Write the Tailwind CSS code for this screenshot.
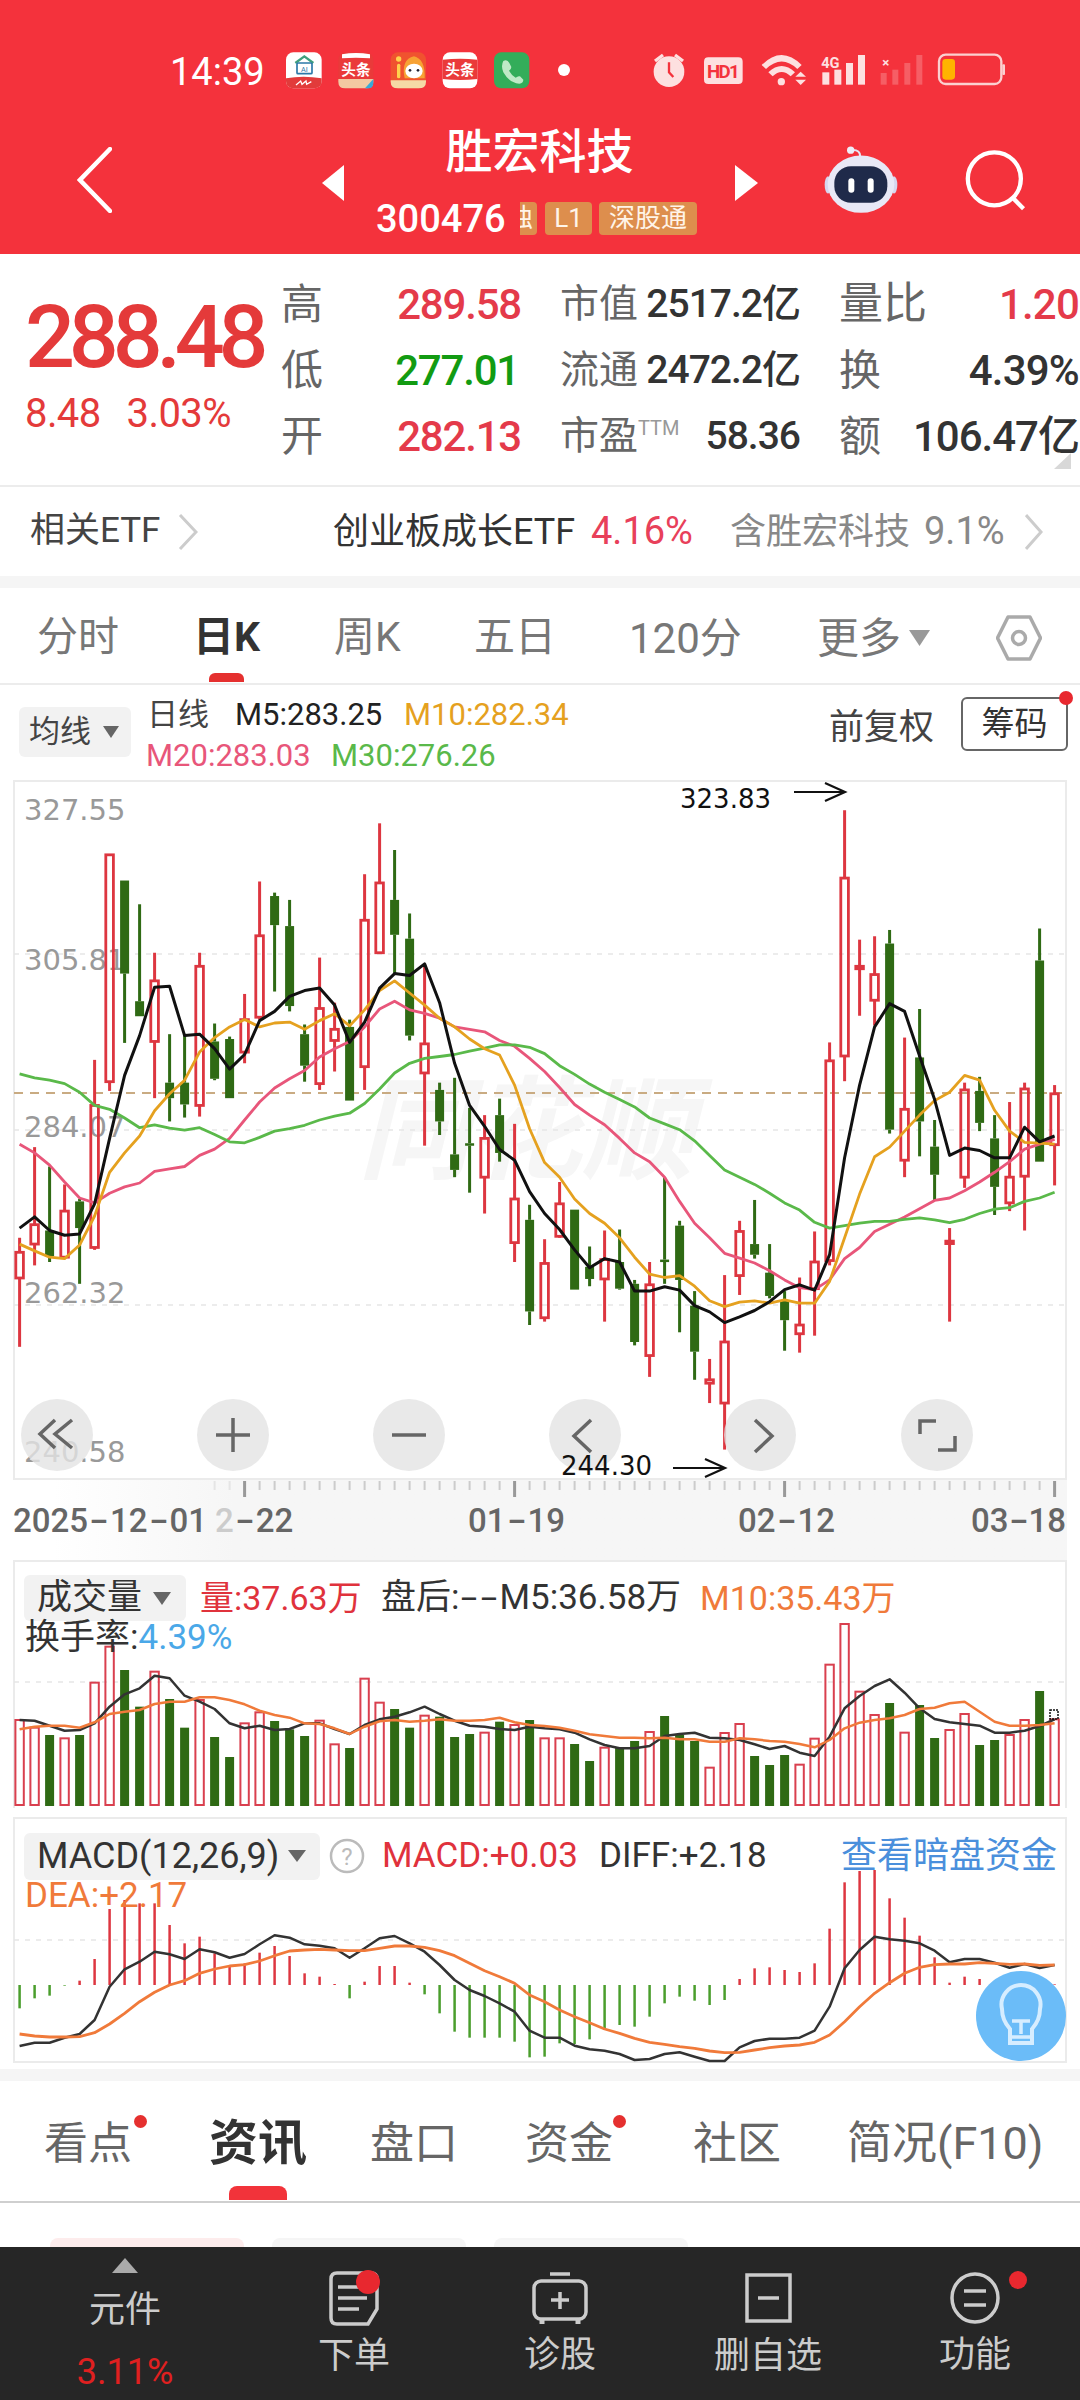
<!DOCTYPE html>
<html lang="zh">
<head>
<meta charset="utf-8">
<script src="https://cdn.jsdelivr.net/npm/@tailwindcss/browser@4"></script>
</head>
<body>
<div class="relative w-[1080px] h-[2400px] overflow-hidden bg-white [font-family:Roboto,'Noto_Sans_CJK_SC',sans-serif]">

  <!-- red header -->
  <header class="h-[254px] pt-[39px] bg-[#f4323c] text-white">
    <div class="flex items-center h-[65px] pl-[170px]">
      <span class="w-[100px] text-[38px] leading-none">14:39</span>
      <svg class="w-[320px] h-[65px]" viewBox="0 0 960 195">
        <rect x="48" y="40" width="107" height="108" rx="22" fill="#fff"/>
        <path d="M48 118 Q100 108 155 118 V126 Q155 148 133 148 H70 Q48 148 48 126Z" fill="#e23b3b"/>
        <path d="M76 72 L103 52 L130 72" fill="none" stroke="#3f9f7e" stroke-width="7"/>
        <rect x="81" y="72" width="45" height="32" rx="3" fill="none" stroke="#2b78a8" stroke-width="5"/>
        <text x="103" y="98" font-size="22" text-anchor="middle" fill="#2b78a8" font-family="Roboto">AI</text>
        <path d="M78 138 l14 -12 l4 10 l12 -10 l2 10 l14 -8" fill="none" stroke="#fff" stroke-width="4"/>
        <rect x="205" y="40" width="105" height="108" rx="22" fill="#ea3a3a"/>
        <path d="M216 46 Q258 38 300 46 V58 Q258 54 216 58Z" fill="#fff"/>
        <text x="258" y="108" font-size="44" font-weight="700" text-anchor="middle" fill="#fff" font-family="Noto Sans CJK SC">头条</text>
        <path d="M205 120 H310 V128 Q310 148 290 148 H225 Q205 148 205 128Z" fill="#f3c9a2"/>
        <path d="M285 148 L310 120 V132 Q310 148 295 148Z" fill="#38a9d8"/>
        <rect x="362" y="40" width="106" height="108" rx="22" fill="#f0532f"/>
        <path d="M404 118 Q392 62 432 52 Q466 60 464 118Z" fill="#f7a234"/>
        <circle cx="386" cy="60" r="8" fill="#ffd24d"/>
        <rect x="381" y="74" width="10" height="44" rx="5" fill="#ffd24d"/>
        <ellipse cx="432" cy="96" rx="26" ry="22" fill="#fff"/>
        <circle cx="420" cy="94" r="4" fill="#223"/><circle cx="444" cy="94" r="4" fill="#223"/>
        <path d="M362 124 H468 V128 Q468 148 446 148 H384 Q362 148 362 128Z" fill="#f5d9a6"/>
        <rect x="518" y="40" width="104" height="108" rx="22" fill="#fff"/>
        <path d="M518 62 Q570 56 622 62 V120 Q570 126 518 120Z" fill="#ea3a3a"/>
        <text x="570" y="108" font-size="44" font-weight="700" text-anchor="middle" fill="#fff" font-family="Noto Sans CJK SC">头条</text>
        <rect x="672" y="40" width="106" height="108" rx="22" fill="#33ad5a"/>
        <path d="M700 66 Q712 60 718 72 L724 84 Q724 90 717 95 Q724 108 737 116 Q744 110 750 112 L760 122 Q760 132 748 134 Q718 132 700 100 Q692 80 700 66Z" fill="#bfe9c6"/>
        <circle cx="882" cy="93" r="18" fill="#fff"/>
      </svg>
      <svg class="w-[380px] h-[65px] ml-[50px]" viewBox="0 0 1140 195">
        <g fill="#fde0e0">
          <circle cx="87" cy="98" r="46"/>
          <path d="M42 62 L66 44 L72 52 L48 70Z M132 62 L108 44 L102 52 L126 70Z"/>
          <path d="M192 68 Q192 55 205 55 H295 Q308 55 308 68 V122 Q308 135 295 135 H205 Q192 135 192 122Z"/>
          <path d="M365 78 Q425 18 485 78 L472 90 Q425 45 378 90Z"/>
          <path d="M385 100 Q425 62 465 100 L452 112 Q425 86 398 112Z"/>
          <circle cx="424" cy="128" r="11"/>
          <path d="M466 113 L482 98 L498 113Z"/>
          <path d="M466 122 H498 L482 138Z"/>
          <rect x="547" y="100" width="21" height="37"/><rect x="583" y="92" width="21" height="45"/>
          <rect x="618" y="72" width="21" height="65"/><rect x="654" y="48" width="21" height="89"/>
        </g>
        <path d="M87 70 V100 L100 114" fill="none" stroke="#f4323c" stroke-width="7"/>
        <text x="250" y="118" font-size="56" font-weight="700" text-anchor="middle" fill="#f4323c" font-family="Roboto" textLength="98">HD1</text>
        <text x="571" y="86" font-size="44" font-weight="700" text-anchor="middle" fill="#fde0e0" font-family="Roboto">4G</text>
        <text x="737" y="84" font-size="40" font-weight="700" text-anchor="middle" fill="#fde0e0" font-family="Roboto">×</text>
        <g fill="#fde0e0" opacity=".25">
          <rect x="722" y="102" width="18" height="35"/><rect x="757" y="92" width="18" height="45"/>
          <rect x="793" y="72" width="18" height="65"/><rect x="829" y="48" width="18" height="89"/>
        </g>
        <rect x="897" y="47" width="187" height="88" rx="20" fill="none" stroke="#fbd0d0" stroke-width="7"/>
        <rect x="907" y="60" width="38" height="62" rx="10" fill="#ffb300"/>
        <rect x="1087" y="76" width="8" height="32" rx="3" fill="#fbd0d0"/>
      </svg>
    </div>
    <div class="flex items-center h-[112px] mt-[20px] pl-[77px]">
      <svg class="w-[35px] h-[66px] shrink-0" viewBox="0 0 35 66"><path d="M33 2 L3 33 L33 64" fill="none" stroke="#fff" stroke-width="4.5" stroke-linecap="round"/></svg>
      <svg class="w-[22px] h-[36px] ml-[210px] shrink-0 mt-[5px]" viewBox="0 0 22 36"><path d="M22 0 V36 L0 18Z" fill="#fff"/></svg>
      <div class="w-[391px] shrink-0 h-[112px]">
        <div class="h-[56px] leading-[56px] text-center text-[47px] font-medium">胜宏科技</div>
        <div class="flex items-center h-[33px] mt-[22px] pl-[32px]">
          <span class="w-[144px] text-[38px] leading-none font-medium">300476</span>
          <span class="w-[17px] h-[33px] overflow-hidden bg-[#dd8e4d] rounded-r text-[26px] leading-[33px] text-[#fff4e8]"><span class="block -ml-[13px]">独</span></span>
          <span class="ml-[8px] w-[47px] h-[33px] bg-[#dd8e4d] rounded text-center text-[26px] leading-[33px] text-[#fff4e8]">L1</span>
          <span class="ml-[7px] w-[98px] h-[33px] bg-[#dd8e4d] rounded text-center text-[26px] leading-[33px] text-[#fff4e8]">深股通</span>
        </div>
      </div>
      <svg class="w-[23px] h-[36px] shrink-0 mt-[5px]" viewBox="0 0 23 36"><path d="M0 0 V36 L23 18Z" fill="#fff"/></svg>
      <svg class="w-[80px] h-[72px] ml-[62px] shrink-0" viewBox="60 10 240 215">
        <path d="M180 48 Q182 26 155 28" fill="none" stroke="#e6e6f5" stroke-width="6"/><circle cx="152" cy="28" r="11" fill="#eeeef8"/>
        <ellipse cx="84" cy="132" rx="10" ry="26" fill="#d6d6ee"/><ellipse cx="282" cy="132" rx="10" ry="26" fill="#d6d6ee"/>
        <ellipse cx="183" cy="130" rx="100" ry="86" fill="#e8e8f6"/>
        <rect x="103" y="76" width="159" height="110" rx="50" fill="#1f2a4a"/>
        <rect x="145" y="112" width="18" height="44" rx="9" fill="#fff"/><rect x="203" y="112" width="18" height="44" rx="9" fill="#fff"/>
      </svg>
      <svg class="w-[65px] h-[63px] ml-[63px] shrink-0" viewBox="490 30 195 190"><circle cx="584" cy="120" r="80" fill="none" stroke="#fff" stroke-width="13"/><path d="M640 178 L672 210" stroke="#fff" stroke-width="13"/></svg>
    </div>
  </header>

  <!-- quote stats -->
  <section class="relative flex h-[233px] border-b-2 border-[#ececec]">
    <div class="w-[281px] shrink-0 pl-[25px] pt-[40px]">
      <div class="text-[88px] leading-[86px] font-medium tracking-[-6.2px] text-[#e43a3a] whitespace-nowrap">288.48</div>
      <div class="flex gap-[26px] mt-[12px] text-[40px] leading-[44px] tracking-[-.6px] text-[#e43a3a]"><span>8.48</span><span>3.03%</span></div>
    </div>
    <div class="grid grid-cols-[240px_240px_240px] gap-x-[39px] auto-rows-[66px] pt-[17px] text-[#666]">
      <div class="flex items-center justify-between"><span class="text-[42px]">高</span><span class="text-[42px] font-medium tracking-[-1.2px] text-[#e43a4a]">289.58</span></div>
      <div class="flex items-center justify-between"><span class="text-[39px]">市值</span><span class="text-[39px] font-medium tracking-[-1px] text-[#333]">2517.2亿</span></div>
      <div class="flex items-center justify-between"><span class="text-[44px]">量比</span><span class="text-[42px] font-medium tracking-[-.8px] text-[#e43a4a]">1.20</span></div>
      <div class="flex items-center justify-between"><span class="text-[42px]">低</span><span class="text-[42px] font-medium tracking-[-1.2px] text-[#129b12] pr-[2px]">277.01</span></div>
      <div class="flex items-center justify-between"><span class="text-[39px]">流通</span><span class="text-[39px] font-medium tracking-[-1px] text-[#333]">2472.2亿</span></div>
      <div class="flex items-center justify-between"><span class="text-[42px]">换</span><span class="text-[42px] font-medium tracking-[-.8px] text-[#333]">4.39%</span></div>
      <div class="flex items-center justify-between"><span class="text-[42px]">开</span><span class="text-[42px] font-medium tracking-[-1.2px] text-[#e43a4a]">282.13</span></div>
      <div class="flex items-center justify-between"><span class="text-[39px]">市盈<sup class="text-[20px] text-[#999] top-[-14px]">TTM</sup></span><span class="text-[39px] font-medium tracking-[-1px] text-[#333]">58.36</span></div>
      <div class="flex items-center justify-between"><span class="text-[42px]">额</span><span class="text-[42px] font-medium tracking-[-1px] text-[#333]">106.47亿</span></div>
    </div>
    <svg class="absolute right-[9px] bottom-[16px] w-[17px] h-[16px]" viewBox="0 0 17 16"><path d="M17 0 V16 H0Z" fill="#d8d8d8"/></svg>
  </section>

  <!-- related ETF -->
  <section class="flex items-center h-[89px] text-[36px]">
    <div class="flex items-center w-[333px] pl-[30px] shrink-0 text-[#444]">
      <span class="w-[132px] text-[35px] whitespace-nowrap">相关ETF</span>
      <svg class="ml-[16px] w-[20px] h-[36px]" viewBox="0 0 20 36"><path d="M2 1 L18 18 L2 35" fill="none" stroke="#ccc" stroke-width="3"/></svg>
    </div>
    <span class="w-[239px] shrink-0 whitespace-nowrap text-[#333]">创业板成长ETF</span>
    <span class="ml-[19px] w-[101px] shrink-0 text-[38px] text-[#e8405a]">4.16%</span>
    <span class="ml-[38px] w-[175px] shrink-0 whitespace-nowrap text-[#888]">含胜宏科技</span>
    <span class="ml-[19px] w-[80px] shrink-0 text-[38px] text-[#888]">9.1%</span>
    <svg class="ml-[21px] w-[18px] h-[36px] shrink-0" viewBox="0 0 18 36"><path d="M1 1 L16 18 L1 35" fill="none" stroke="#ccc" stroke-width="3"/></svg>
  </section>
  <div class="h-[12px] bg-[#f5f5f5]"></div>

  <!-- period tabs -->
  <nav class="relative flex items-center h-[97px] pt-[5px] border-b-2 border-[#ececec] text-[41px] text-[#777] whitespace-nowrap">
    <span class="ml-[37px] w-[81px] shrink-0">分时</span>
    <span class="relative ml-[75px] w-[68px] shrink-0 font-bold text-[#333]">日K<span class="absolute left-[16px] top-[66px] w-[35px] h-[9px] bg-[#e5302f] rounded-t-md"></span></span>
    <span class="ml-[73px] w-[66px] shrink-0">周K</span>
    <span class="ml-[74px] w-[81px] shrink-0">五日</span>
    <span class="ml-[74px] w-[115px] shrink-0 text-[42px]">120分</span>
    <span class="ml-[73px] w-[82px] shrink-0 text-[42px]">更多</span>
    <svg class="ml-[10px] w-[21px] h-[16px] shrink-0" viewBox="0 0 21 16"><path d="M0 0 H21 L10.5 16Z" fill="#999"/></svg>
    <svg class="ml-[66px] w-[46px] h-[46px] shrink-0" viewBox="0 0 46 46"><path d="M1.5 23 L12 2 H34 L44.5 23 L34 44 H12Z" fill="none" stroke="#aaa" stroke-width="3.5" stroke-linejoin="round"/><circle cx="23" cy="23" r="6.5" fill="none" stroke="#aaa" stroke-width="3.5"/></svg>
  </nav>

  <!-- legend -->
  <section class="flex h-[95px]">
    <div class="flex items-center justify-between ml-[19px] mt-[22px] w-[112px] h-[50px] px-[10px] bg-[#f2f2f2] rounded-md text-[31px] text-[#444] shrink-0">
      <span>均线</span>
      <svg class="w-[16px] h-[12px] mr-[2px]" viewBox="0 0 16 12"><path d="M0 0 H16 L8 12Z" fill="#666"/></svg>
    </div>
    <div class="ml-[16px] mt-[11px] w-[443px] shrink-0 text-[31px] leading-[38px] whitespace-nowrap">
      <div class="flex"><span class="w-[62px] text-[#444]">日线</span><span class="ml-[26px] w-[146px] text-[#222]">M5:283.25</span><span class="ml-[23px] text-[#e5a11f]">M10:282.34</span></div>
      <div class="flex mt-[3px]"><span class="w-[160px] -ml-[1px] text-[#e8567a]">M20:283.03</span><span class="ml-[25px] text-[#5ab94a]">M30:276.26</span></div>
    </div>
    <div class="flex items-start ml-auto pr-[12px] mt-[12px]">
      <span class="mt-[5px] mr-[27px] text-[35px] text-[#444] whitespace-nowrap">前复权</span>
      <span class="relative w-[107px] h-[54px] border-2 border-[#666] rounded-md text-center text-[33px] leading-[50px] text-[#333]">筹码<span class="absolute -right-[7px] -top-[8px] w-[14px] h-[14px] rounded-full bg-[#e8282f]"></span></span>
    </div>
  </section>

  <!-- K line chart -->
  <svg id="kchart" class="block" width="1080" height="700" viewBox="0 780 1080 700">
    <rect x="14" y="781" width="1052" height="698" fill="#fff" stroke="#ebebeb" stroke-width="2"/>
    <text x="358" y="1170" font-size="112" font-weight="700" font-style="italic" fill="#f6f6f6" font-family="Noto Sans CJK SC">同花顺</text>
    <g stroke-dasharray="5 6" stroke="#e6e6e6" stroke-width="1.5">
      <path d="M14 954 H1066"/><path d="M14 1130 H1066"/><path d="M14 1305 H1066"/>
    </g>
    <path d="M14 1093 H1062" stroke="#c9ab82" stroke-width="2" stroke-dasharray="9 7"/>
    <g font-size="29" fill="#999" font-family="DejaVu Sans">
      <text x="24" y="820">327.55</text>
      <text x="24" y="970">305.81</text>
      <text x="24" y="1137">284.07</text>
      <text x="24" y="1303">262.32</text>
      <text x="24" y="1462">240.58</text>
    </g>
    <g id="kg"></g>
    <g fill="#e3e3e3" fill-opacity=".8">
      <circle cx="57" cy="1435" r="36"/><circle cx="233" cy="1435" r="36"/><circle cx="409" cy="1435" r="36"/>
      <circle cx="585" cy="1435" r="36"/><circle cx="760" cy="1435" r="36"/><circle cx="937" cy="1435" r="36"/>
    </g>
    <g fill="none" stroke="#666" stroke-width="3.5">
      <path d="M55 1420 L40 1434 L55 1448 M72 1420 L55 1434 L72 1448"/>
      <path d="M216 1435 H250 M233 1418 V1452"/>
      <path d="M392 1435 H426"/>
      <path d="M591 1420 L574 1436 L591 1452"/>
      <path d="M755 1420 L772 1436 L755 1452"/>
      <path d="M920 1434 V1421 H936 M955 1436 V1450 H938"/>
    </g>
    <g font-size="26" fill="#111" font-family="DejaVu Sans">
      <text x="680" y="808">323.83</text>
      <text x="561" y="1475">244.30</text>
    </g>
    <path d="M794 792 H844 M825 783 L845 792 L825 801" fill="none" stroke="#111" stroke-width="2.2"/>
    <path d="M673 1468 H724 M705 1459 L725 1468 L705 1477" fill="none" stroke="#111" stroke-width="2.2"/>
  </svg>

  <!-- time axis -->
  <section class="w-[1067px] h-[80px] bg-linear-to-r from-white from-[5%] to-[#f6f6f6] to-[22%]">
    <svg id="ticks" class="block" width="1067" height="20" viewBox="0 1480 1067 20"></svg>
    <div class="flex text-[33px] leading-[40px] mt-[1px] text-[#666] font-medium pl-[13px] whitespace-nowrap">
      <span class="w-[192px] shrink-0">2025<span class="inline-block w-[22px] text-center scale-x-[1.7]">-</span>12<span class="inline-block w-[22px] text-center scale-x-[1.7]">-</span>01</span>
      <span class="ml-[10px] w-[80px] shrink-0"><span class="text-[#ccc]">2</span><span class="inline-block w-[22px] text-center scale-x-[1.7]">-</span>22</span>
      <span class="ml-[173px] w-[94px] shrink-0">01<span class="inline-block w-[22px] text-center scale-x-[1.7]">-</span>19</span>
      <span class="ml-[176px] w-[94px] shrink-0">02<span class="inline-block w-[22px] text-center scale-x-[1.7]">-</span>12</span>
      <span class="ml-[139px] w-[94px] shrink-0">03<span class="inline-block w-[20px] text-center scale-x-[1.7]">-</span>18</span>
    </div>
  </section>

  <!-- volume panel -->
  <section class="relative ml-[13px] w-[1054px] h-[248px]">
    <svg id="volchart" class="absolute inset-0" width="1054" height="248" viewBox="13 1560 1054 248">
      <rect x="14" y="1561" width="1052" height="250" fill="#fff" stroke="#ebebeb" stroke-width="2"/>
      <path d="M14 1682 H1066" stroke="#e6e6e6" stroke-width="1.5" stroke-dasharray="5 6"/>
      <g id="vg"></g>
    </svg>
    <div class="relative flex items-center pt-[12px] whitespace-nowrap text-[34px]">
      <div class="flex items-center ml-[11px] w-[162px] h-[46px] pl-[13px] bg-[#f2f2f2] rounded-md text-[35px] text-[#333] shrink-0">成交量<svg class="ml-[11px] w-[18px] h-[13px]" viewBox="0 0 18 13"><path d="M0 0 H18 L9 13Z" fill="#666"/></svg></div>
      <span class="ml-[14px] w-[160px] shrink-0 text-[#e0323c]">量:37.63万</span>
      <span class="ml-[21px] w-[297px] shrink-0 text-[35px] text-[#333]">盘后:<span class="inline-block w-[20px] text-center scale-x-[1.7]">-</span><span class="inline-block w-[20px] text-center scale-x-[1.7]">-</span>M5:36.58万</span>
      <span class="ml-[22px] text-[#f07a3a]">M10:35.43万</span>
    </div>
    <div class="relative ml-[12px] -mt-[7px] text-[35px] leading-[40px] text-[#333] whitespace-nowrap">换手率:<span class="text-[#4aa8e8]">4.39%</span></div>
  </section>
  <div class="h-[9px]"></div>

  <!-- MACD panel -->
  <section class="relative ml-[13px] w-[1054px] h-[246px]">
    <svg id="macdchart" class="absolute inset-0" width="1054" height="246" viewBox="13 1817 1054 246">
      <rect x="14" y="1818" width="1052" height="244" fill="#fff" stroke="#ebebeb" stroke-width="2"/>
      <path d="M14 1940 H1066" stroke="#e6e6e6" stroke-width="1.5" stroke-dasharray="5 6"/>
      <g id="mg"></g>
    </svg>
    <div class="relative flex items-center pt-[12px] whitespace-nowrap text-[35px]">
      <div class="flex items-center ml-[11px] w-[296px] h-[47px] pl-[13px] bg-[#f2f2f2] rounded-md text-[#333] shrink-0"><span class="w-[251px] shrink-0 text-[36px]">MACD(12,26,9)</span><svg class="w-[18px] h-[12px]" viewBox="0 0 18 12"><path d="M0 0 H18 L9 12Z" fill="#666"/></svg></div>
      <svg class="ml-[9px] w-[36px] h-[36px] shrink-0" viewBox="0 0 36 36"><circle cx="18" cy="18" r="16" fill="none" stroke="#bbb" stroke-width="2.5"/><text x="18" y="27" font-size="24" text-anchor="middle" fill="#bbb" font-family="Roboto">?</text></svg>
      <span class="ml-[17px] w-[196px] shrink-0 text-[#e0323c]">MACD:+0.03</span>
      <span class="ml-[21px] w-[166px] shrink-0 text-[#333]">DIFF:+2.18</span>
      <span class="ml-[76px] text-[36px] text-[#4a8fdc]">查看暗盘资金</span>
    </div>
    <div class="relative ml-[12px] -mt-[7px] text-[35px] leading-[40px] text-[#f07a3a] whitespace-nowrap">DEA:+2.17</div>
    <svg class="absolute left-[963px] top-[154px] w-[90px] h-[90px]" viewBox="976 1971 90 90">
      <circle cx="1021" cy="2016" r="45" fill="#6bbcf8"/>
      <path d="M1010 2029 Q1002 2020 1002 2009 A19.500 19.500 0 1 1 1040 2009 Q1040 2020 1032 2029 V2043 H1010Z" fill="none" stroke="#d6edff" stroke-width="4"/>
      <path d="M1012 2021 H1030 M1021 2021 V2034 M1012 2037 H1030" fill="none" stroke="#d6edff" stroke-width="3.500"/>
    </svg>
  </section>

  <div class="h-[6px]"></div>
  <div class="h-[12px] bg-[#f5f5f5]"></div>

  <!-- content tabs -->
  <nav class="relative flex items-center h-[122px] pt-[5px] border-b-2 border-[#cfcfcf] text-[44px] text-[#666] whitespace-nowrap">
    <span class="relative ml-[44px] w-[89px] shrink-0">看点<span class="absolute -right-[14px] top-[4px] w-[13px] h-[13px] rounded-full bg-[#e5302f]"></span></span>
    <span class="relative ml-[76px] w-[97px] shrink-0 text-[49px] font-bold text-[#333]">资讯<span class="absolute left-[20px] top-[79px] w-[58px] h-[14px] bg-[#f2333a] rounded-t-lg"></span></span>
    <span class="ml-[64px] w-[88px] shrink-0">盘口</span>
    <span class="relative ml-[67px] w-[88px] shrink-0">资金<span class="absolute -right-[13px] top-[4px] w-[13px] h-[13px] rounded-full bg-[#e5302f]"></span></span>
    <span class="ml-[80px] w-[88px] shrink-0">社区</span>
    <span class="ml-[66px] shrink-0 text-[45px]">简况(F10)</span>
  </nav>
  <div class="flex items-end h-[44px] pl-[50px] gap-[28px]">
    <div class="w-[194px] h-[9px] bg-[#fdecec] rounded-t-lg"></div>
    <div class="w-[194px] h-[9px] bg-[#f5f5f5] rounded-t-lg"></div>
    <div class="w-[194px] h-[9px] bg-[#f5f5f5] rounded-t-lg"></div>
  </div>

  <!-- bottom bar -->
  <footer class="flex h-[153px] bg-[#262626] text-[36px] text-[#ccc] whitespace-nowrap">
    <div class="flex flex-col items-center w-[250px] shrink-0 pt-[11px]">
      <svg class="w-[26px] h-[15px]" viewBox="0 0 26 15"><path d="M13 0 L26 15 H0Z" fill="#aaa"/></svg>
      <span class="mt-[17px] leading-[40px]">元件</span>
      <span class="mt-[20px] text-[36px] leading-[44px] text-[#e02020]">3.11%</span>
    </div>
    <div class="relative flex flex-col items-center w-[208px] shrink-0 pt-[24px]">
      <svg class="w-[50px] h-[55px]" viewBox="0 0 50 55" fill="none" stroke="#ccc" stroke-width="3.500"><path d="M8 2 H42 Q48 2 48 8 V38 L39 53 H8 Q2 53 2 47 V8 Q2 2 8 2Z"/><path d="M9 16 H30 M9 27 H38 M9 38 H30"/></svg>
      <span class="absolute left-[106px] top-[23px] w-[24px] h-[24px] rounded-full bg-[#e8282f]"></span>
      <span class="mt-[10px] leading-[40px]">下单</span>
    </div>
    <div class="flex flex-col items-center w-[204px] shrink-0 pt-[25px]">
      <svg class="w-[56px] h-[53px]" viewBox="0 0 56 53" fill="none" stroke="#ccc" stroke-width="3.500"><path d="M18 2 H38"/><rect x="2" y="9" width="52" height="38" rx="7"/><path d="M28 20 V37 M19 28 H37"/><path d="M10 48 V52 M46 48 V52" stroke-width="5"/></svg>
      <span class="mt-[10px] leading-[40px]">诊股</span>
    </div>
    <div class="flex flex-col items-center w-[212px] shrink-0 pt-[26px]">
      <svg class="w-[47px] h-[50px]" viewBox="0 0 47 50" fill="none" stroke="#ccc" stroke-width="3.500"><rect x="2" y="2" width="43" height="46"/><path d="M13 25 H34"/></svg>
      <span class="mt-[13px] leading-[40px]">删自选</span>
    </div>
    <div class="relative flex flex-col items-center w-[202px] shrink-0 pt-[25px]">
      <svg class="w-[50px] h-[52px]" viewBox="0 0 50 52" fill="none" stroke="#ccc" stroke-width="3.500"><ellipse cx="25" cy="26" rx="23" ry="24"/><path d="M14 19 H36 M14 33 H36"/></svg>
      <span class="absolute left-[135px] top-[24px] w-[18px] h-[18px] rounded-full bg-[#e8282f]"></span>
      <span class="mt-[11px] leading-[40px]">功能</span>
    </div>
  </footer>
</div>

<script>
const R='#dd3640',G='#2f6a14',NS='http://www.w3.org/2000/svg';
const X=i=>19.6+15*i;
function add(g,tag,a){const e=document.createElementNS(NS,tag);for(const k in a)e.setAttribute(k,a[k]);g.appendChild(e);}
function line(g,arr,Y,color,w){add(g,'polyline',{points:arr.map((p,i)=>X(i).toFixed(1)+','+Y(p).toFixed(1)).join(' '),fill:'none',stroke:color,'stroke-width':w,'stroke-linejoin':'round'});}
const c=[[1,965,995,1048,1190],[1,778,938,978,1022],[0,818,950,1003,1015],[1,855,910,1005,1005],[0,885,890,945,1060],[1,598,692,985,990],[1,175,175,643,662],[0,228,228,420,563],[0,277,477,508,508],[1,377,435,560,677],
[0,545,645,677,725],[0,545,645,690,717],[1,377,405,692,715],[0,523,560,637,640],[0,550,555,677,677],[1,462,515,582,605],[1,230,342,510,515],[0,253,260,320,457],[0,268,322,487,498],[0,525,545,610,643],
[1,387,492,647,660],[1,480,535,558,622],[0,515,530,682,682],[1,215,310,612,660],[1,110,233,377,377],[0,165,268,340,420],[0,296,348,548,558],[1,400,565,625,775],[0,645,660,725,753],[0,635,793,825,840],
[0,697,770,775,872],[1,712,760,840,915],[0,678,712,790,808],[1,730,885,975,1015],[0,897,928,1117,1145],[1,968,1018,1130,1138],[1,850,895,962,965],[0,907,907,1072,1072],[0,983,1025,1050,1065],[1,950,1010,1050,1138],
[0,948,1015,1070,1072],[0,1052,1060,1180,1187],[1,1015,1062,1208,1252],[0,840,1010,1014,1060],[0,930,940,1052,1160],[0,1075,1105,1200,1258],[1,1215,1258,1265,1306],[1,1042,1180,1306,1402],[1,930,952,1043,1083],[0,887,978,1000,1008],
[0,978,1037,1085,1090],[0,1075,1095,1135,1198],[1,1047,1145,1163,1202],[1,952,1015,1070,1167],[1,562,600,1012,1022],[1,83,223,590,642],[1,350,405,410,507],[1,343,422,475,527],[0,330,358,742,750],[1,552,700,805,840],
[0,493,593,725,797],[0,722,777,835,887],[1,945,972,977,1138],[1,645,660,840,862],[0,633,662,728,745],[0,712,760,860,918],[1,685,840,893,910],[1,645,658,838,950],[0,327,393,808,808],[1,650,668,773,857]];
const MY=p=>770+p/2.063,kg=document.getElementById('kg');
c.forEach((d,i)=>{const x=X(i),col=d[0]?R:G;
 add(kg,'line',{x1:x,x2:x,y1:MY(d[1]),y2:MY(d[2]),stroke:col,'stroke-width':3});
 add(kg,'line',{x1:x,x2:x,y1:MY(d[3]),y2:MY(d[4]),stroke:col,'stroke-width':3});
 const h=Math.max(MY(d[3])-MY(d[2]),1);
 if(d[0])add(kg,'rect',{x:x-3.8,y:MY(d[2]),width:7.600,height:h,fill:'none',stroke:col,'stroke-width':2.800});
 else add(kg,'rect',{x:x-4.500,y:MY(d[2]),width:9,height:Math.max(h,2.500),fill:col});
});
line(kg,[772,790,815,850,883,893,873,860,852,828,823,818,795,782,760,722,685,656,637,620,592,575,560,530,493,477,495,502,512,530,535,540,558,570,595,622,655,690,712,732,760,790,808,840,890,935,965,997,1007,1017,1033,1052,1068,1072,1052,1008,985,952,937,922,905,888,883,868,850,830,808,782,772,762],MY,'#e8567a',2.800);
line(kg,[627,635,640,647,665,692,700,718,738,732,739,743,738,752,767,769,758,745,740,733,722,714,708,688,658,625,605,595,591,587,580,574,567,567,572,585,610,628,648,665,680,695,718,730,742,765,795,825,840,855,873,893,908,933,945,940,935,931,931,927,924,928,934,927,915,906,903,890,883,871],MY,'#5ab94a',2.800);
line(kg,[978,992,1005,1008,980,920,830,790,755,703,668,640,582,552,530,515,530,522,520,535,517,503,528,495,455,435,460,485,512,530,555,575,588,650,740,810,840,885,915,935,965,1005,1040,1047,1043,1065,1095,1107,1098,1095,1100,1093,1100,1100,1055,965,875,798,778,745,712,682,665,630,640,702,745,768,770,772],MY,'#e5a11f',2.800);
line(kg,[945,922,950,960,957,895,760,630,548,448,446,548,545,575,617,587,517,498,467,455,450,485,562,520,450,420,424,400,480,605,692,735,783,805,870,915,948,990,1027,1008,1015,1075,1075,1066,1073,1105,1118,1140,1128,1115,1097,1072,1062,1073,1000,800,650,530,482,498,590,680,795,780,785,800,800,737,767,755],MY,'#111',3);

const tk=document.getElementById('ticks');
for(let i=13;i<70;i++){const mj=[15,33,51,69].includes(i);add(tk,'line',{x1:X(i),x2:X(i),y1:1481,y2:mj?1497:1490,stroke:mj?'#999':'#ccc','stroke-width':mj?3:2,opacity:i<15?.4:1});}

const v=[480,503,525,535,525,368,260,330,440,335,417,503,420,531,591,490,457,483,508,528,482,553,564,356,428,447,503,467,470,531,522,518,485,495,480,535,535,552,603,563,563,543,516,468,525,543,623,519,492,588,615,585,614,536,314,192,395,465,429,518,435,534,510,462,555,540,525,480,393,478];
const VY=p=>1560+p/3,vg=document.getElementById('vg'),BOT=1805;
v.forEach((p,i)=>{const x=X(i);
 if(c[i][0])add(vg,'rect',{x:x-4.200,y:VY(p),width:8.400,height:BOT-VY(p),fill:'none',stroke:'#d9404f','stroke-width':2});
 else add(vg,'rect',{x:x-4.500,y:VY(p),width:9,height:BOT+1-VY(p),fill:G});
});
line(vg,[480,482,497,512,510,490,440,403,385,347,355,407,425,447,490,505,497,510,507,490,490,507,522,495,478,470,457,440,462,482,497,500,507,510,500,505,508,518,538,555,565,565,558,528,522,518,533,535,540,553,567,558,578,588,530,445,408,378,358,398,445,477,487,492,497,518,518,512,498,478],VY,'#333',2.500);
line(vg,[508,500,497,497,503,487,462,455,450,432,425,425,412,412,420,433,452,465,473,490,492,505,522,500,484,480,485,482,478,482,482,480,473,487,495,498,503,512,523,528,533,533,535,533,538,538,545,545,535,538,543,545,552,562,540,505,488,480,475,465,447,443,430,425,455,485,497,497,495,490],VY,'#f07a3a',2.500);
add(vg,'rect',{x:1050,y:1710,width:8,height:9,fill:'none',stroke:'#111','stroke-width':1.500,'stroke-dasharray':'2 1'});

const m=[1345,1315,1307,1277,1262,1197,1047,1020,1030,1030,1095,1150,1130,1180,1215,1210,1178,1158,1188,1240,1250,1272,1315,1265,1218,1218,1268,1303,1360,1415,1433,1433,1433,1445,1492,1490,1450,1452,1438,1410,1395,1400,1370,1330,1310,1322,1335,1320,1257,1225,1222,1230,1236,1210,1106,967,933,930,1015,1073,1127,1192,1268,1250,1257,1277,1285,1280,1285,1273];
const mg=document.getElementById('mg'),Z=1985;
m.forEach((p,i)=>{const y=VY(p);add(mg,'line',{x1:X(i),x2:X(i),y1:Z,y2:y,stroke:y<Z?'#dd3640':'#4a9e2c','stroke-width':2.500});});
line(mg,[1458,1448,1448,1433,1422,1380,1280,1228,1205,1175,1183,1197,1168,1177,1193,1182,1153,1126,1133,1153,1157,1165,1193,1165,1135,1128,1150,1175,1215,1260,1290,1308,1330,1355,1412,1433,1433,1457,1468,1472,1482,1500,1497,1482,1477,1490,1503,1503,1462,1443,1436,1436,1433,1412,1340,1225,1170,1130,1138,1142,1150,1172,1207,1197,1197,1208,1223,1212,1224,1215],VY,'#333',2.500);
line(mg,[1422,1428,1431,1431,1430,1418,1392,1360,1325,1297,1275,1262,1240,1227,1218,1214,1203,1187,1173,1170,1168,1170,1172,1172,1165,1158,1158,1162,1172,1187,1210,1232,1250,1270,1305,1325,1350,1370,1388,1407,1420,1435,1447,1453,1460,1465,1473,1478,1477,1470,1463,1458,1455,1447,1425,1385,1340,1300,1268,1240,1222,1214,1212,1212,1208,1210,1213,1212,1216,1215],VY,'#f07a3a',2.800);
</script>
</body>
</html>
